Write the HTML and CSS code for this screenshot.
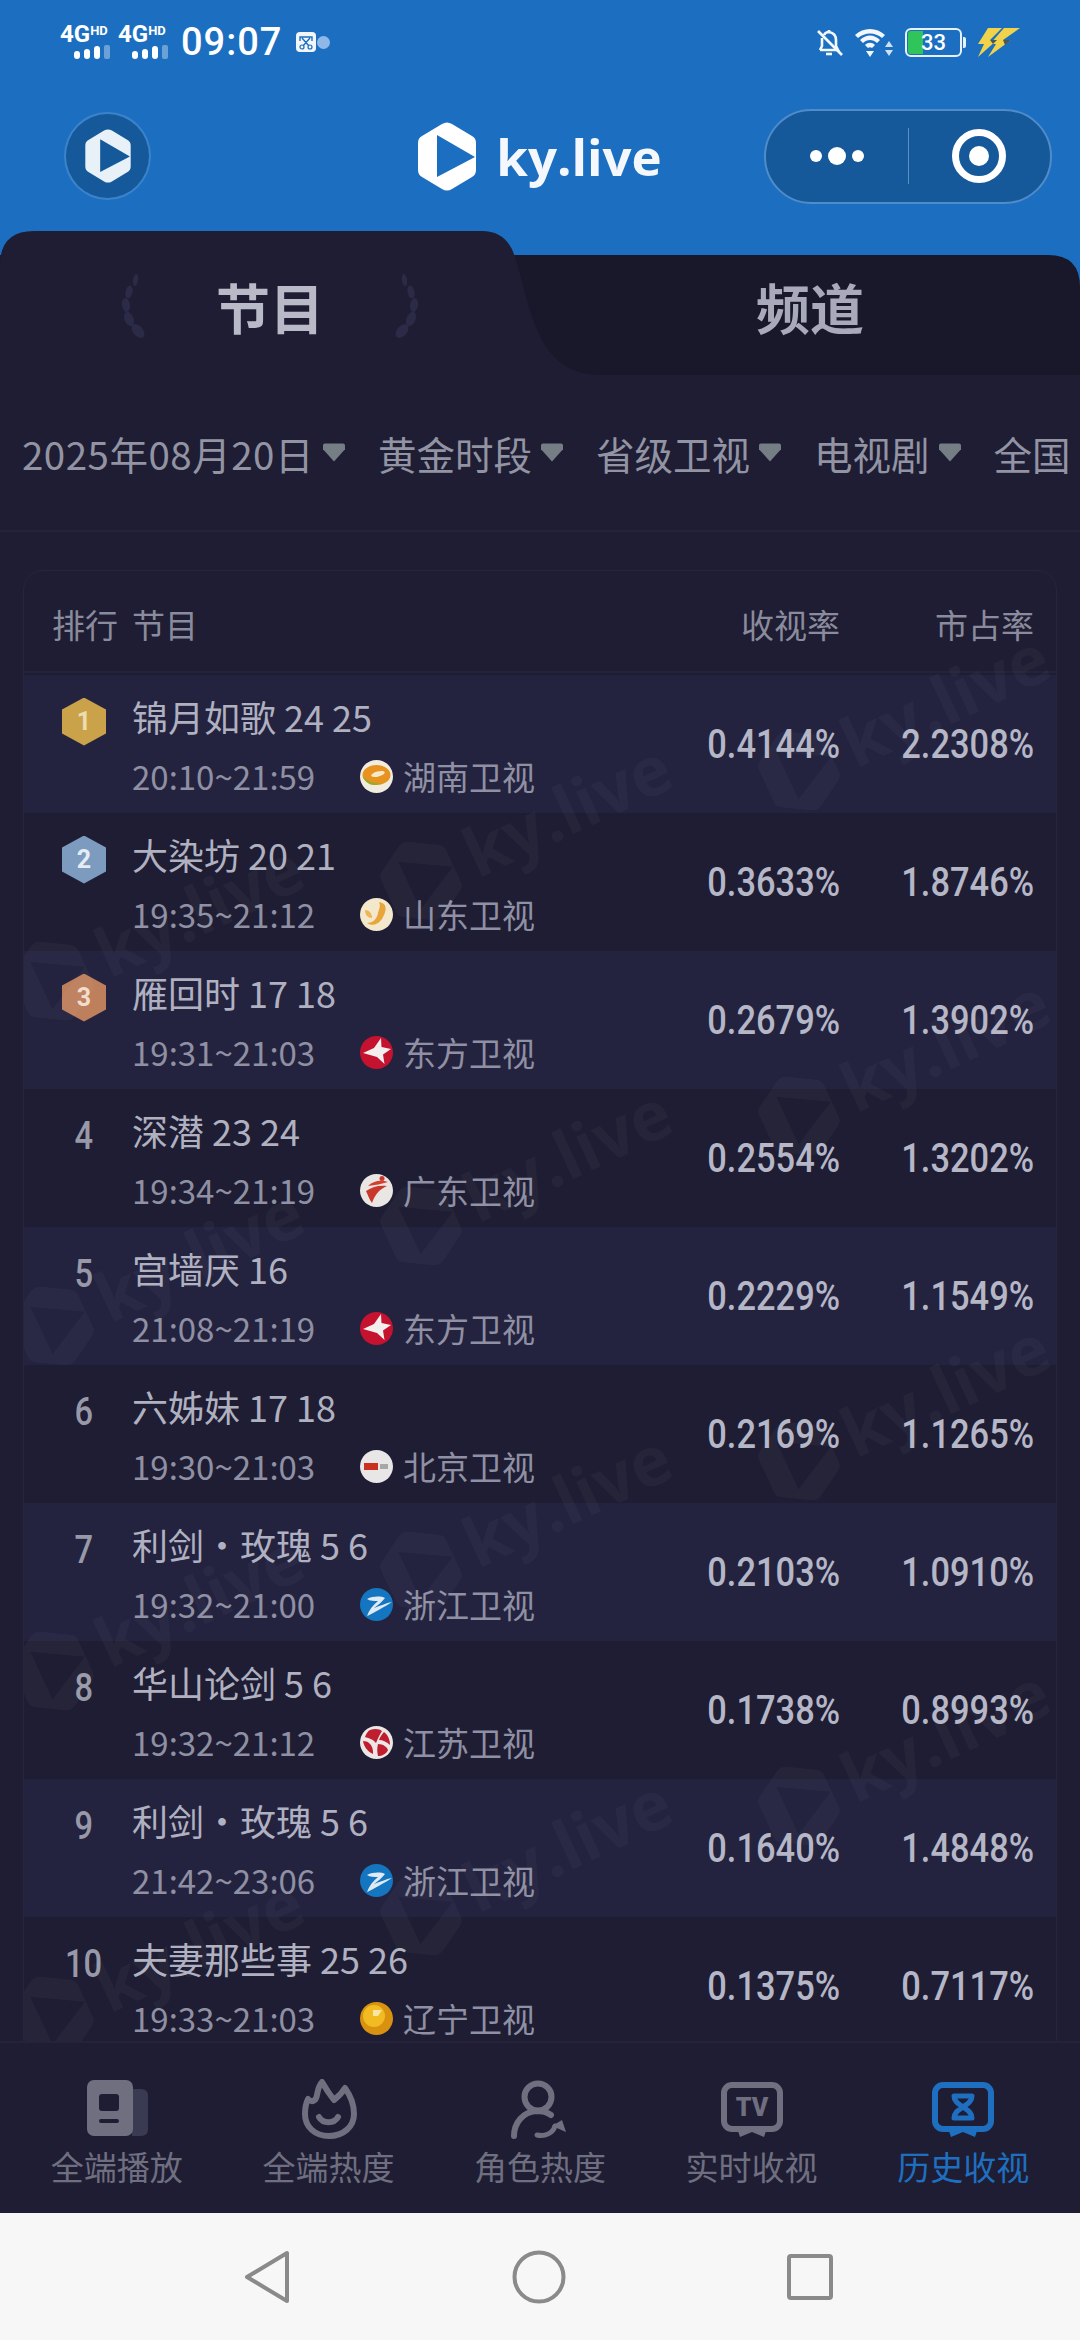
FILE: index.html
```html
<!DOCTYPE html>
<html lang="zh-CN">
<head>
  <meta charset="UTF-8" />
  <title>ky.live 历史收视</title>
  <link rel="stylesheet" href="styles.css">
</head>
<body>
  <!-- Shared shapes -->
  <svg class="defs" width="0" height="0">
    <defs>
      <symbol id="ky-logo" viewBox="0 0 58 69">
        <path fill-rule="evenodd" d="M24 2 Q29 -1 34 2 L54 14 Q58 16 58 21 V48 Q58 53 54 55 L34 67 Q29 70 24 67 L4 55 Q0 53 0 48 V21 Q0 16 4 14 Z M19 13 L19 55 L57 35 Z" />
      </symbol>
      <symbol id="caret" viewBox="0 0 23 19">
        <path d="M2 0 H21 Q23 0 23 2 V6 L11.5 19 L0 6 V2 Q0 0 2 0 Z" />
      </symbol>
      <symbol id="wheat" viewBox="0 0 28 64">
        <ellipse cx="15.5" cy="6" rx="2.5" ry="6" transform="rotate(8 15.5 6)" />
        <ellipse cx="9" cy="18" rx="3.5" ry="6.5" transform="rotate(12 9 18)" />
        <ellipse cx="6" cy="31" rx="4" ry="7" transform="rotate(-8 6 31)" />
        <ellipse cx="9" cy="45" rx="4.5" ry="7.5" transform="rotate(-22 9 45)" />
        <ellipse cx="18" cy="57" rx="5" ry="8" transform="rotate(-40 18 57)" />
      </symbol>

      <!-- Channel logos -->
      <symbol id="ch-hunan" viewBox="0 0 33 33">
        <circle cx="16.5" cy="16.5" r="16.5" fill="#f1ece0" />
        <ellipse cx="16.5" cy="15" rx="14" ry="10" fill="#e8921f" />
        <path d="M3 16 C6 25 14 27 22 23 C14 24 8 22 3 16 Z" fill="#9aa82b" />
        <ellipse cx="18" cy="14" rx="7" ry="2.6" fill="#f7e9c8" transform="rotate(-14 18 14)" />
      </symbol>
      <symbol id="ch-shandong" viewBox="0 0 33 33">
        <circle cx="16.5" cy="16.5" r="16.5" fill="#f3e7cc" />
        <path d="M19 4 C27 5 27 12 23 19 C20 26 12 29 7 25 C13 25 17 21 18 15 C19 11 21 8 19 4 Z" fill="#e9a43a" />
        <path d="M5 12 C9 12 12 15 12 20 C8 20 5 17 5 12 Z" fill="#eeb559" />
      </symbol>
      <symbol id="ch-dragon" viewBox="0 0 33 33">
        <circle cx="16.5" cy="16.5" r="16.5" fill="#c4122f" />
        <path d="M21 2 L21.5 11 L31 13 L23 18.5 L24.5 28 L17 21 L3 17 L14 12 Z" fill="#f4efef" />
      </symbol>
      <symbol id="ch-guangdong" viewBox="0 0 33 33">
        <circle cx="16.5" cy="16.5" r="16.5" fill="#e9e6e4" />
        <path d="M8 12 C14 6 22 6 28 8 C22 10 15 11 8 12 Z" fill="#d2402f" />
        <path d="M6 17 C13 12 20 11 27 12 C20 15 15 20 12 29 C9 25 8 21 6 17 Z" fill="#c9382a" />
        <circle cx="22" cy="4.5" r="2.5" fill="#c9382a" />
      </symbol>
      <symbol id="ch-beijing" viewBox="0 0 33 33">
        <circle cx="16.5" cy="16.5" r="16.5" fill="#e8e6e6" />
        <rect x="4" y="13" width="14" height="7" fill="#c9301f" />
        <rect x="20" y="14" width="8" height="5" fill="#a9a6a6" />
      </symbol>
      <symbol id="ch-zhejiang" viewBox="0 0 33 33">
        <circle cx="16.5" cy="16.5" r="16.5" fill="#1476c0" />
        <path d="M7 11 C13 8 21 8 25 10 C22 14 18 17 14 20 C20 18 26 15 32 14 C24 19 14 25 7 28 C9 22 13 17 18 13 C14 13 10 13 7 11 Z" fill="#dfeaf4" />
      </symbol>
      <symbol id="ch-jiangsu" viewBox="0 0 33 33">
        <circle cx="16.5" cy="16.5" r="16.5" fill="#ece6e6" />
        <path d="M10 4 C15 2 20 3 22 5 C20 8 18 12 16 17 C13 13 8 12 5 11 C6 8 8 5 10 4 Z" fill="#bf1e2e" />
        <path d="M24 6 C28 9 30 14 30 19 C27 16 23 14 19 14 C20 11 22 8 24 6 Z" fill="#bf1e2e" />
        <path d="M3 15 C8 15 12 18 13 25 C13 26 13 27 13 28 C8 26 4 21 3 15 Z" fill="#bf1e2e" />
        <path d="M18 18 C23 18 27 21 28 24 C26 28 22 30 18 30 C17 26 17 22 18 18 Z" fill="#bf1e2e" />
      </symbol>
      <symbol id="ch-liaoning" viewBox="0 0 33 33">
        <circle cx="16.5" cy="16.5" r="16.5" fill="#d8920f" />
        <circle cx="14" cy="14" r="11" fill="#f2bb22" />
        <path d="M13 8 H22 L18 14 H13 Z" fill="#f7e6a8" />
      </symbol>
    </defs>
  </svg>

  <div class="page">
    <!-- Blue header -->
    <header class="header">
      <div class="statusbar">
        <div class="status-left">
          <div class="signal">
            <div class="signal-text">4G<sup>HD</sup></div>
            <svg class="signal-bars" width="36" height="14" viewBox="0 0 36 14">
              <rect x="0" y="6" width="6" height="8" rx="3" fill="#fff" />
              <rect x="10" y="4" width="6" height="10" rx="3" fill="#fff" />
              <rect x="20" y="1" width="6" height="13" rx="3" fill="#fff" />
              <rect x="30" y="0" width="6" height="14" rx="2" fill="#fff" opacity=".35" />
            </svg>
          </div>
          <div class="signal">
            <div class="signal-text">4G<sup>HD</sup></div>
            <svg class="signal-bars" width="36" height="14" viewBox="0 0 36 14">
              <rect x="0" y="6" width="6" height="8" rx="3" fill="#fff" />
              <rect x="10" y="4" width="6" height="10" rx="3" fill="#fff" />
              <rect x="20" y="1" width="6" height="13" rx="3" fill="#fff" />
              <rect x="30" y="0" width="6" height="14" rx="2" fill="#fff" opacity=".35" />
            </svg>
          </div>
          <span class="clock">09:07</span>
          <svg width="20" height="20" viewBox="0 0 20 20">
            <rect width="20" height="20" rx="4" fill="#f2f6fb" />
            <path d="M4 9 V5 H16 V9 M6 6 L13 14 M14 6 L7 14" fill="none" stroke="#1c6fc0" stroke-width="1.4" />
            <circle cx="6" cy="15" r="2" fill="none" stroke="#1c6fc0" stroke-width="1.2" />
            <circle cx="14" cy="15" r="2" fill="none" stroke="#1c6fc0" stroke-width="1.2" />
          </svg>
          <span class="status-dot"></span>
        </div>
        <div class="status-right">
          <svg width="26" height="29" viewBox="0 0 26 29" fill="none" stroke="#f2f7fc" stroke-width="2.6">
            <path d="M3 22 H21 L19 18 V12 C19 8 17 5 12 4 C10 4 8 5 7 7 M5 10 C5 11 5 11 5 12 V18 L3 22" />
            <path d="M12 2 V4" />
            <path d="M9 26 H15" />
            <path d="M1 3 L25 27" />
          </svg>
          <svg width="38" height="29" viewBox="0 0 38 29">
            <path d="M0 7 C8 -1 22 -1 30 7 L27 10 C20 4 10 4 3 10 Z" fill="#f2f7fc" />
            <path d="M5 12 C11 6 19 6 25 12 L22 15 C18 11 12 11 8 15 Z" fill="#f2f7fc" />
            <path d="M10 17 C13 14 17 14 20 17 L17 20 C16 19 14 19 13 20 Z" fill="#f2f7fc" />
            <path d="M11 23 H19 L15 29 Z" fill="#f2f7fc" />
            <path d="M34 13 L38 19 H30 Z M30 22 H38 L34 28 Z" fill="#cfe0f2" />
          </svg>
          <div class="battery">
            <div class="battery-body">
              <span class="battery-fill"></span>
              <span class="battery-num">33</span>
            </div>
            <span class="battery-nub"></span>
          </div>
          <svg width="42" height="30" viewBox="0 0 42 30">
            <path d="M10 1 H24 L12 13 H19 L0 30 L6 17 H0 Z" fill="#f0d34a" />
            <path d="M26 1 H42 L25 13 H33 L10 30 L18 17 H12 Z" fill="#f0d34a" />
            <path d="M12 13 L19 13 L15 17 Z M25 13 L33 13 L27 18 Z" fill="#4a5a52" />
          </svg>
        </div>
      </div>

      <nav class="navbar">
        <div class="nav-left">
          <div class="nav-circle">
            <svg class="nav-circle-logo" width="46" height="54"><use href="#ky-logo" /></svg>
          </div>
        </div>
        <div class="brand">
          <svg class="brand-logo" width="58" height="69"><use href="#ky-logo" /></svg>
          <span class="brand-name">ky.live</span>
        </div>
        <div class="nav-right">
          <div class="capsule">
            <div class="capsule-btn">
              <svg width="58" height="20" viewBox="0 0 58 20" fill="#fff">
                <circle cx="8" cy="10" r="6" />
                <circle cx="29" cy="10" r="9" />
                <circle cx="50" cy="10" r="6" />
              </svg>
            </div>
            <div class="capsule-btn capsule-btn-last">
              <svg width="56" height="56" viewBox="0 0 56 56">
                <circle cx="28" cy="28" r="23.5" fill="none" stroke="#fff" stroke-width="7" />
                <circle cx="28" cy="28" r="10" fill="#fff" />
              </svg>
            </div>
          </div>
        </div>
      </nav>
    </header>

    <!-- 节目 / 频道 tabs -->
    <section class="tabs">
      <svg class="tabs-bg" width="1080" height="144" viewBox="0 0 1080 144">
        <path d="M0 24 H1048 Q1080 24 1080 56 V144 H0 Z" fill="#19182b" />
        <path d="M0 144 V34 Q0 0 34 0 H482 Q507 0 515 26 C530 72 535 144 600 144 Z" fill="#1e1d33" />
      </svg>
      <div class="tab tab-active">
        <svg class="wheat" width="28" height="64"><use href="#wheat" /></svg>
        <span class="tab-label">节目</span>
        <svg class="wheat wheat-right" width="28" height="64"><use href="#wheat" /></svg>
      </div>
      <div class="tab">
        <span class="tab-label">频道</span>
      </div>
    </section>

    <main class="content">
      <!-- Filters -->
      <div class="filters">
        <div class="filter filter-date">2025年08月20日<svg class="caret" width="22" height="19"><use href="#caret" /></svg></div>
        <div class="filter">黄金时段<svg class="caret" width="22" height="19"><use href="#caret" /></svg></div>
        <div class="filter">省级卫视<svg class="caret" width="22" height="19"><use href="#caret" /></svg></div>
        <div class="filter">电视剧<svg class="caret" width="22" height="19"><use href="#caret" /></svg></div>
        <div class="filter">全国<svg class="caret" width="22" height="19"><use href="#caret" /></svg></div>
      </div>

      <!-- Ranking table -->
      <div class="table-card">
        <div class="table-head">
          <span class="head-rank">排行</span>
          <span class="head-name">节目</span>
          <span class="head-rate">收视率</span>
          <span class="head-share">市占率</span>
        </div>

        <div class="rows">
          <div class="row">
            <div class="rank"><span class="badge badge-gold">1</span></div>
            <div class="info">
              <div class="title">锦月如歌 24 25</div>
              <div class="meta"><span class="time">20:10~21:59</span><svg class="ch-logo" width="33" height="33"><use href="#ch-hunan" /></svg><span class="channel">湖南卫视</span></div>
            </div>
            <div class="col-rate"><span class="value">0.4144%</span></div>
            <div class="col-share"><span class="value">2.2308%</span></div>
          </div>

          <div class="row">
            <div class="rank"><span class="badge badge-silver">2</span></div>
            <div class="info">
              <div class="title">大染坊 20 21</div>
              <div class="meta"><span class="time">19:35~21:12</span><svg class="ch-logo" width="33" height="33"><use href="#ch-shandong" /></svg><span class="channel">山东卫视</span></div>
            </div>
            <div class="col-rate"><span class="value">0.3633%</span></div>
            <div class="col-share"><span class="value">1.8746%</span></div>
          </div>

          <div class="row">
            <div class="rank"><span class="badge badge-bronze">3</span></div>
            <div class="info">
              <div class="title">雁回时 17 18</div>
              <div class="meta"><span class="time">19:31~21:03</span><svg class="ch-logo" width="33" height="33"><use href="#ch-dragon" /></svg><span class="channel">东方卫视</span></div>
            </div>
            <div class="col-rate"><span class="value">0.2679%</span></div>
            <div class="col-share"><span class="value">1.3902%</span></div>
          </div>

          <div class="row">
            <div class="rank"><span class="rank-num">4</span></div>
            <div class="info">
              <div class="title">深潜 23 24</div>
              <div class="meta"><span class="time">19:34~21:19</span><svg class="ch-logo" width="33" height="33"><use href="#ch-guangdong" /></svg><span class="channel">广东卫视</span></div>
            </div>
            <div class="col-rate"><span class="value">0.2554%</span></div>
            <div class="col-share"><span class="value">1.3202%</span></div>
          </div>

          <div class="row">
            <div class="rank"><span class="rank-num">5</span></div>
            <div class="info">
              <div class="title">宫墙厌 16</div>
              <div class="meta"><span class="time">21:08~21:19</span><svg class="ch-logo" width="33" height="33"><use href="#ch-dragon" /></svg><span class="channel">东方卫视</span></div>
            </div>
            <div class="col-rate"><span class="value">0.2229%</span></div>
            <div class="col-share"><span class="value">1.1549%</span></div>
          </div>

          <div class="row">
            <div class="rank"><span class="rank-num">6</span></div>
            <div class="info">
              <div class="title">六姊妹 17 18</div>
              <div class="meta"><span class="time">19:30~21:03</span><svg class="ch-logo" width="33" height="33"><use href="#ch-beijing" /></svg><span class="channel">北京卫视</span></div>
            </div>
            <div class="col-rate"><span class="value">0.2169%</span></div>
            <div class="col-share"><span class="value">1.1265%</span></div>
          </div>

          <div class="row">
            <div class="rank"><span class="rank-num">7</span></div>
            <div class="info">
              <div class="title">利剑・玫瑰 5 6</div>
              <div class="meta"><span class="time">19:32~21:00</span><svg class="ch-logo" width="33" height="33"><use href="#ch-zhejiang" /></svg><span class="channel">浙江卫视</span></div>
            </div>
            <div class="col-rate"><span class="value">0.2103%</span></div>
            <div class="col-share"><span class="value">1.0910%</span></div>
          </div>

          <div class="row">
            <div class="rank"><span class="rank-num">8</span></div>
            <div class="info">
              <div class="title">华山论剑 5 6</div>
              <div class="meta"><span class="time">19:32~21:12</span><svg class="ch-logo" width="33" height="33"><use href="#ch-jiangsu" /></svg><span class="channel">江苏卫视</span></div>
            </div>
            <div class="col-rate"><span class="value">0.1738%</span></div>
            <div class="col-share"><span class="value">0.8993%</span></div>
          </div>

          <div class="row">
            <div class="rank"><span class="rank-num">9</span></div>
            <div class="info">
              <div class="title">利剑・玫瑰 5 6</div>
              <div class="meta"><span class="time">21:42~23:06</span><svg class="ch-logo" width="33" height="33"><use href="#ch-zhejiang" /></svg><span class="channel">浙江卫视</span></div>
            </div>
            <div class="col-rate"><span class="value">0.1640%</span></div>
            <div class="col-share"><span class="value">1.4848%</span></div>
          </div>

          <div class="row">
            <div class="rank"><span class="rank-num">10</span></div>
            <div class="info">
              <div class="title">夫妻那些事 25 26</div>
              <div class="meta"><span class="time">19:33~21:03</span><svg class="ch-logo" width="33" height="33"><use href="#ch-liaoning" /></svg><span class="channel">辽宁卫视</span></div>
            </div>
            <div class="col-rate"><span class="value">0.1375%</span></div>
            <div class="col-share"><span class="value">0.7117%</span></div>
          </div>
        </div>

        <!-- Faint ky.live watermark over the table -->
        <svg class="watermark" width="1034" height="1500" viewBox="23 570 1034 1500">
          <defs>
            <g id="wm">
              <g transform="rotate(-25)">
                <use href="#ky-logo" x="-36" y="-43" width="72" height="86" />
                <text class="wm-text" x="52" y="22">ky.live</text>
              </g>
            </g>
          </defs>
          <use href="#wm" x="798" y="770" />
          <use href="#wm" x="798" y="1115" />
          <use href="#wm" x="798" y="1460" />
          <use href="#wm" x="798" y="1805" />
          <use href="#wm" x="420" y="880" />
          <use href="#wm" x="420" y="1225" />
          <use href="#wm" x="420" y="1570" />
          <use href="#wm" x="420" y="1915" />
          <use href="#wm" x="52" y="980" />
          <use href="#wm" x="52" y="1325" />
          <use href="#wm" x="52" y="1670" />
          <use href="#wm" x="52" y="2015" />
        </svg>
      </div>
    </main>

    <!-- Bottom tab bar -->
    <footer class="tabbar">
      <div class="tabbar-item">
        <svg width="64" height="60" viewBox="0 0 64 60">
          <path d="M47 10 H56 Q63 10 63 17 V50 Q63 57 56 57 H47 Z" fill="#3a3a52" />
          <rect x="2" y="1" width="46" height="56" rx="7" fill="currentColor" />
          <rect x="14" y="15" width="20" height="17" rx="3" fill="#1e1d33" />
          <rect x="14" y="40" width="20" height="4" rx="2" fill="#1e1d33" />
        </svg>
        <span>全端播放</span>
      </div>
      <div class="tabbar-item">
        <svg width="64" height="60" viewBox="0 0 64 60" fill="none" stroke="currentColor" stroke-width="6" stroke-linejoin="round" stroke-linecap="round">
          <path d="M12 20 C16 24 20 22 21 16 C22 10 23 6 26 3 C30 10 34 16 38 21 C42 18 46 14 49 9 C54 16 58 26 58 35 C58 48 47 57 33 57 C19 57 9 48 9 35 C9 29 10 24 12 20 Z" />
          <path d="M23 38 C27 45 38 45 42 38" />
        </svg>
        <span>全端热度</span>
      </div>
      <div class="tabbar-item">
        <svg width="64" height="60" viewBox="0 0 64 60" fill="none" stroke="currentColor" stroke-width="6" stroke-linecap="round">
          <circle cx="30" cy="18" r="13.5" />
          <path d="M6 57 C6 44 15 33 28 32 C33 32 39 33 43 36" />
          <path d="M29 56 C37 58 45 54 47 47" stroke-width="5" />
          <path d="M44 47 L54 41 L58 53 Z" fill="currentColor" stroke="none" />
        </svg>
        <span>角色热度</span>
      </div>
      <div class="tabbar-item">
        <svg width="64" height="60" viewBox="0 0 64 60">
          <rect x="4" y="6" width="56" height="44" rx="8" fill="none" stroke="currentColor" stroke-width="6" />
          <path d="M17 49 H47 L44 58 L32 53 L20 58 Z" fill="currentColor" />
          <text class="tv-text" x="32" y="37">TV</text>
        </svg>
        <span>实时收视</span>
      </div>
      <div class="tabbar-item tabbar-item-active">
        <svg width="64" height="60" viewBox="0 0 64 60">
          <rect x="4" y="6" width="56" height="44" rx="8" fill="none" stroke="currentColor" stroke-width="6" />
          <path d="M17 49 H47 L44 58 L32 53 L20 58 Z" fill="currentColor" />
          <path d="M23 17 H41 C41 23 36 25 32 28 C36 31 41 33 41 39 H23 C23 33 28 31 32 28 C28 25 23 23 23 17 Z" fill="none" stroke="currentColor" stroke-width="5" stroke-linejoin="round" />
        </svg>
        <span>历史收视</span>
      </div>
    </footer>

    <!-- Android nav keys -->
    <div class="syskeys">
      <svg width="46" height="54" viewBox="0 0 46 54" fill="none" stroke="#8a8a8a" stroke-width="4" stroke-linejoin="round">
        <path d="M43 3 V51 L3 27 Z" />
      </svg>
      <svg width="54" height="54" viewBox="0 0 54 54" fill="none" stroke="#8a8a8a" stroke-width="4">
        <circle cx="27" cy="27" r="24.5" />
      </svg>
      <svg width="46" height="46" viewBox="0 0 46 46" fill="none" stroke="#8a8a8a" stroke-width="4" stroke-linejoin="round">
        <rect x="2" y="2" width="42" height="42" rx="2" />
      </svg>
    </div>
  </div>
</body>
</html>
```

FILE: styles.css
```css
/* Reset & page */
* {
  margin: 0;
  padding: 0;
  box-sizing: border-box;
}
body {
  font-family: "Noto Sans CJK SC", "Noto Sans", sans-serif;
  background: #1e1d33;
  color: #b0b1c0;
}
.defs {
  position: absolute;
}
.page {
  width: 1080px;
  height: 2340px;
  display: flex;
  flex-direction: column;
  background: #1c6fc0;
  overflow: hidden;
}

/* Status bar */
.statusbar {
  height: 84px;
  padding: 0 60px 0 62px;
  display: flex;
  justify-content: space-between;
  align-items: center;
  color: #fff;
}
.status-left,
.status-right {
  display: flex;
  align-items: center;
}
.status-right {
  gap: 12px;
}
.signal {
  width: 48px;
  margin-right: 10px;
  display: flex;
  flex-direction: column;
  align-items: flex-end;
}
.signal-text {
  width: 50px;
  height: 19px;
  font-family: Roboto, sans-serif;
  font-weight: 700;
  font-size: 24px;
  line-height: 19px;
  white-space: nowrap;
}
.signal-text sup {
  font-size: 13px;
  line-height: 0;
  vertical-align: 7px;
}
.signal-bars {
  margin-top: 1px;
}
.clock {
  width: 98px;
  margin: 0 17px 0 3px;
  font-family: Roboto, sans-serif;
  font-size: 38px;
  font-weight: 500;
  letter-spacing: 1px;
  white-space: nowrap;
}
.status-dot {
  width: 13px;
  height: 13px;
  margin-left: 1px;
  border-radius: 50%;
  background: #8fb8e8;
}
.battery {
  display: flex;
  align-items: center;
}
.battery-body {
  position: relative;
  width: 57px;
  height: 29px;
  border: 2px solid #e6f1fb;
  border-radius: 6px;
  overflow: hidden;
}
.battery-fill {
  position: absolute;
  left: 1px;
  top: 1px;
  bottom: 1px;
  width: 15px;
  border-radius: 3px 0 0 3px;
  background: #2fc55a;
}
.battery-num {
  position: relative;
  display: block;
  text-align: center;
  font-family: Roboto, sans-serif;
  font-size: 22px;
  font-weight: 500;
  line-height: 25px;
}
.battery-nub {
  width: 3px;
  height: 11px;
  margin-left: 1px;
  border-radius: 0 2px 2px 0;
  background: #e6f1fb;
}

/* Mini program nav bar */
.navbar {
  height: 147px;
  padding: 0 28px 3px;
  display: grid;
  grid-template-columns: 1fr auto 1fr;
  align-items: center;
}
.nav-left {
  padding-left: 36px;
}
.nav-right {
  display: flex;
  justify-content: flex-end;
}
.nav-circle {
  width: 87px;
  height: 88px;
  border-radius: 50%;
  border: 2px solid #3a83ca;
  background: #15599b;
  display: flex;
  align-items: center;
  justify-content: center;
}
.nav-circle-logo {
  fill: #e8f0f8;
}
.brand {
  display: flex;
  align-items: center;
  gap: 20px;
}
.brand-logo {
  fill: #fff;
}
.brand-name {
  font-family: "Open Sans", sans-serif;
  font-size: 51px;
  font-weight: 700;
  line-height: 60px;
  color: #f4f8fc;
}
.capsule {
  width: 288px;
  height: 95px;
  display: flex;
  align-items: center;
  border: 2px solid #4f8cc9;
  border-radius: 48px;
  background: #15599b;
}
.capsule-btn {
  flex: 1;
  height: 56px;
  display: flex;
  align-items: center;
  justify-content: center;
}
.capsule-btn-last {
  border-left: 1px solid #5c8fc2;
}

/* Tabs */
.tabs {
  position: relative;
  height: 144px;
  display: grid;
  grid-template-columns: 1fr 1fr;
}
.tabs-bg {
  position: absolute;
  left: 0;
  top: 0;
}
.tab {
  position: relative;
  padding-top: 6px;
  display: flex;
  align-items: center;
  justify-content: center;
  gap: 68px;
}
.tab-label {
  font-size: 54px;
  font-weight: 700;
  color: #a9aab9;
}
.tab-active .tab-label {
  color: #b9bac8;
}
.wheat {
  fill: #2b2b47;
}
.wheat-right {
  transform: scaleX(-1);
}

/* Content */
.content {
  flex: 1;
  min-height: 0;
  background: #1e1d33;
  overflow: hidden;
}

/* Filters */
.filters {
  height: 157px;
  padding-left: 22px;
  display: flex;
  align-items: center;
  gap: 33px;
  border-bottom: 2px solid #24233a;
  font-size: 38.5px;
  color: #9294a3;
  white-space: nowrap;
  overflow: hidden;
}
.filter {
  display: flex;
  align-items: center;
  gap: 9px;
  flex-shrink: 0;
}
.filter-date {
  letter-spacing: 0.5px;
}
.caret {
  fill: #757d85;
  flex-shrink: 0;
}

/* Table */
.table-card {
  position: relative;
  margin: 38px 23px 0;
  height: 1500px;
  border: 1px solid #26253d;
  border-radius: 20px 20px 0 0;
  overflow: hidden;
}
.table-head {
  height: 102px;
  margin-bottom: 2px;
  padding: 6px 22px 0 28px;
  display: flex;
  align-items: center;
  border-bottom: 2px solid #24233a;
  font-size: 33px;
  color: #8a8b9c;
}
.head-name {
  flex: 1;
  margin-left: 14px;
}
.head-rate {
  width: 170px;
  text-align: right;
}
.head-share {
  width: 194px;
  text-align: right;
}
.row {
  height: 138px;
  padding-right: 22px;
  display: flex;
  align-items: center;
}
.row:nth-child(odd) {
  background: #24233f;
}
.rank {
  width: 76px;
  margin: 0 10px 0 22px;
  padding-bottom: 45px;
  display: flex;
  justify-content: center;
}
.rank-num {
  font-family: Roboto, sans-serif;
  font-size: 38px;
  font-weight: 500;
  line-height: 44px;
  color: #9899a8;
  transform: scaleX(.86);
  white-space: nowrap;
}
.badge {
  width: 44px;
  height: 48px;
  display: flex;
  align-items: center;
  justify-content: center;
  clip-path: polygon(50% 0, 100% 25%, 100% 75%, 50% 100%, 0 75%, 0 25%);
  font-family: Roboto, sans-serif;
  font-size: 25px;
  font-weight: 700;
}
.badge-gold {
  background: #c9a24a;
  color: #ecdcae;
}
.badge-silver {
  background: #7d9abf;
  color: #e6ecf4;
}
.badge-bronze {
  background: #bd7f5c;
  color: #f2dccb;
}
.info {
  flex: 1;
  min-width: 0;
  height: 100%;
  padding-top: 15px;
}
.title {
  height: 52px;
  font-size: 36px;
  line-height: 52px;
  color: #b0b1c0;
  white-space: nowrap;
}
.meta {
  margin-top: 11px;
  height: 46px;
  display: flex;
  align-items: center;
  font-size: 33px;
  color: #8f90a3;
}
.time {
  width: 228px;
}
.ch-logo {
  margin-right: 10px;
}
.col-rate {
  width: 170px;
  flex-shrink: 0;
  text-align: right;
}
.col-share {
  width: 194px;
  flex-shrink: 0;
  text-align: right;
}
.value {
  display: inline-block;
  font-family: Roboto, sans-serif;
  font-size: 41px;
  font-weight: 500;
  color: #b5b6c6;
  white-space: nowrap;
  transform: scaleX(.84);
  transform-origin: right center;
}

/* Watermark */
.watermark {
  position: absolute;
  left: 0;
  top: 0;
  fill: rgba(255, 255, 255, 0.03);
  pointer-events: none;
}
.wm-text {
  font-family: "Open Sans", sans-serif;
  font-size: 68px;
  font-weight: 700;
}

/* Bottom tab bar */
.tabbar {
  height: 172px;
  padding: 36px 11px 0;
  flex-shrink: 0;
  display: grid;
  grid-template-columns: repeat(5, 1fr);
  border-top: 2px solid #24233a;
  background: #1e1d33;
}
.tabbar-item {
  display: flex;
  flex-direction: column;
  align-items: center;
  gap: 7px;
  color: #6f6f80;
  font-size: 33px;
  line-height: 40px;
  white-space: nowrap;
}
.tabbar-item-active {
  color: #1f6fc0;
}
.tv-text {
  font-family: Roboto, sans-serif;
  font-size: 25px;
  font-weight: 900;
  text-anchor: middle;
  fill: currentColor;
}

/* System keys */
.syskeys {
  height: 127px;
  flex-shrink: 0;
  padding: 0 247px 0 244px;
  display: flex;
  align-items: center;
  justify-content: space-between;
  background: #f7f7f7;
}
```
